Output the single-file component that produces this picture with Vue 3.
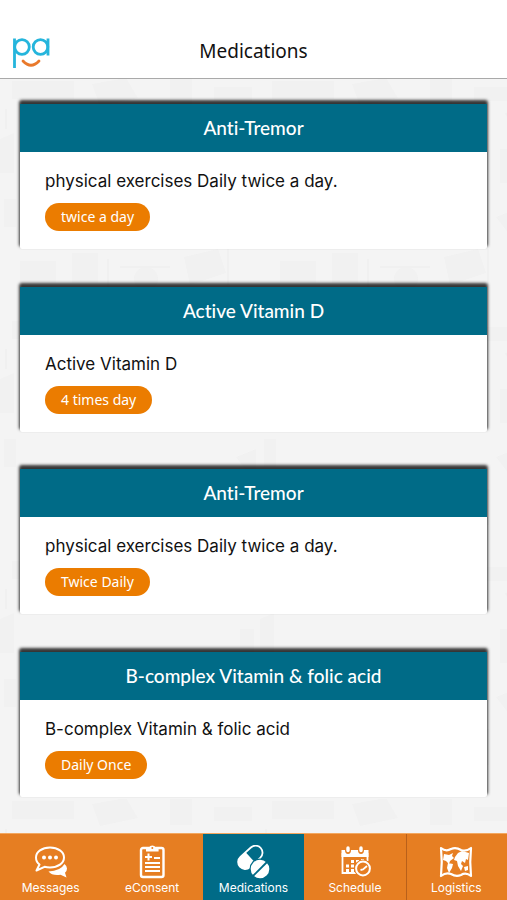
<script setup>
const medications = [
  { id: 1, title: 'Anti-Tremor', text: 'physical exercises Daily twice a day.', dose: 'twice a day' },
  { id: 2, title: 'Active Vitamin D', text: 'Active Vitamin D', dose: '4 times day' },
  { id: 3, title: 'Anti-Tremor', text: 'physical exercises Daily twice a day.', dose: 'Twice Daily' },
  { id: 4, title: 'B-complex Vitamin & folic acid', text: 'B-complex Vitamin & folic acid', dose: 'Daily Once' },
]

const tabs = [
  { id: 'messages', label: 'Messages' },
  { id: 'econsent', label: 'eConsent' },
  { id: 'medications', label: 'Medications', active: true },
  { id: 'schedule', label: 'Schedule' },
  { id: 'logistics', label: 'Logistics' },
]
</script>

<template>
  <div class="screen">
    <header class="topbar">
      <a class="logo" href="#" aria-label="Home">
        <svg viewBox="0 0 38 34" fill="none" stroke-width="2.800">
          <g stroke="#25b5dc">
            <circle cx="10" cy="13" r="7.300" />
            <path d="M2.500 4.500V34M36 4.500v17" />
            <circle cx="28.500" cy="13" r="7.300" />
          </g>
          <path d="M11 27q8 8.500 16 0" stroke="#e9792b" stroke-width="2.800" stroke-linecap="round" />
        </svg>
      </a>
      <h1>Medications</h1>
    </header>

    <main class="list">
      <svg class="pattern" aria-hidden="true">
        <defs>
          <pattern id="sketches" width="260" height="240" patternUnits="userSpaceOnUse">
            <g fill="#f1f1f1">
              <path d="M12 2h62v18H12zM92 5l34-6 12 20-38 8zM170 0h22v26h-22zM214 8h38v14h-38z" />
              <path d="M0 60l14-6v40H0zM4 120h12v28H4zM240 70h14v34h-14zM236 138l20-8v34z" />
              <circle cx="146" cy="200" r="12" />
              <path d="M20 182h36v22H20zM72 174h26v30H72zM184 178l34-8 8 24-36 12z" />
            </g>
            <g fill="none" stroke="#f0f0f0" stroke-width="2">
              <path d="M30 210h54M108 180v34M120 188h50M228 170v36M6 30v20M246 34l10 18" />
            </g>
          </pattern>
        </defs>
        <rect width="100%" height="100%" fill="url(#sketches)" />
      </svg>
      <article v-for="item in medications" :key="item.id" class="card">
        <h2>{{ item.title }}</h2>
        <div class="body">
          <p>{{ item.text }}</p>
          <span class="chip">{{ item.dose }}</span>
        </div>
      </article>
    </main>

    <nav class="tabs">
      <a v-for="tab in tabs" :key="tab.id" href="#" class="tab" :class="{ active: tab.active }">
        <svg v-if="tab.id === 'messages'" viewBox="0 0 34 34">
          <path fill="#fff" d="M30.500 19q2.500 2 2.500 4.500 0 2.500-2 4.200l1.500 4.800-6-2.700q-8.500 1.200-12-3.300 12-.500 16-7.500z" />
          <path fill="#e67e22" stroke="#fff" stroke-width="2" stroke-linejoin="round" d="M16 2.500c8 0 14 4.300 14 10s-6 10-14 10q-3 0-5.500-.700L2.500 25.500 5.500 19.500Q2 17 2 12.500c0-5.700 6-10 14-10z" />
          <g fill="#fff"><circle cx="10" cy="12.500" r="2" /><circle cx="16" cy="12.500" r="2" /><circle cx="22" cy="12.500" r="2" /></g>
        </svg>
        <svg v-else-if="tab.id === 'econsent'" viewBox="0 0 34 34">
          <rect x="6" y="3" width="22.500" height="29" rx="2" fill="none" stroke="#fff" stroke-width="2.400" />
          <path fill="#fff" d="M11 6.500V3.500l3-1q1-2 3.300-2t3.300 2l3 1v3z" />
          <circle cx="17.300" cy="3" r="1" fill="#e67e22" />
          <path fill="none" stroke="#fff" stroke-width="2" d="M13.500 8.500v7M10 12h7M19 13h6M10 18h15M10 22h15M10 26h15" />
        </svg>
        <svg v-else-if="tab.id === 'medications'" viewBox="0 0 34 34">
          <g transform="rotate(-42 14 12)">
            <rect x="0" y="5.500" width="28" height="14" rx="7" fill="none" stroke="#fff" stroke-width="1.800" />
            <path fill="#fff" d="M14 5.500H7a7 7 0 0 0 0 14h7z" />
          </g>
          <circle cx="24" cy="24" r="10.500" fill="#006b87" />
          <circle cx="24" cy="24" r="9.300" fill="#fff" />
          <path d="M17 31L31 17" stroke="#006b87" stroke-width="1.800" />
        </svg>
        <svg v-else-if="tab.id === 'schedule'" viewBox="0 0 34 34">
          <path fill="none" stroke="#fff" stroke-width="1.800" d="M4.500 8v20H19M29.500 8v8" />
          <path fill="#fff" d="M3.500 5H7q0 4 3 4t3-4h7q0 4 3 4t3-4h4.500v7h-27z" />
          <path fill="none" stroke="#fff" stroke-width="3.400" stroke-linecap="round" d="M10 3v2.500M23 3v2.500" />
          <path fill="#fff" d="M13 15h3v3h-3zM18 15h3v3h-3zM23 14h3v3h-3zM8 19.500h3v3H8zM13 19.500h3v3h-3zM8 24h3v3H8zM13 24h3v3h-3z" />
          <circle cx="25" cy="23.500" r="9" fill="#e67e22" />
          <circle cx="25" cy="23.500" r="6.900" fill="none" stroke="#fff" stroke-width="2" />
          <path fill="none" stroke="#fff" stroke-width="1.800" d="M22.500 25l2.500-.500 4-3.500" />
        </svg>
        <svg v-else viewBox="0 0 34 34">
          <path fill="none" stroke="#fff" stroke-width="2.200" stroke-linejoin="round" d="M2 3Q7 7 12 4Q17 2 22 5Q27 7 32 3Q30.500 17 32 31Q27 27 22 30Q17 32 12 29Q7 27 2 31Q3.500 17 2 3Z" />
          <path fill="#fff" d="M5 9l5 1 4-2-1 3 2 2-4 3-1 3-3-3-3-1zM9 18l5 1-1 4-3 5-2-5zM16 12l3-4 4-2 7 2-1 7-2-1-1 4-3-2-1 3 2 2-2 5-3-5-1-5-3-1zM25 22l4-1v4l-3 1z" />
        </svg>
        <span>{{ tab.label }}</span>
      </a>
    </nav>
  </div>
</template>

<style>
body {
  margin: 0;
}
</style>

<style scoped>
.screen {
  display: flex;
  flex-direction: column;
  min-height: 100vh;
  background: #f4f4f4;
  font-family: Inter, "Liberation Sans", sans-serif;
}

h1,
h2,
p {
  margin: 0;
}

.topbar {
  display: grid;
  grid-template-columns: 48px 1fr 48px;
  align-items: center;
  height: 54px;
  padding: 24px 12px 0;
  border-bottom: 1px solid #a9a9a9;
  background: #fff;
}

.logo svg {
  display: block;
  width: 38px;
  height: 34px;
}

h1 {
  color: #111;
  font: 400 19px/30px "Noto Sans", sans-serif;
  text-align: center;
}

.list {
  position: relative;
  display: flex;
  flex: 1;
  flex-direction: column;
  justify-content: space-between;
  gap: 36px;
  padding: 25px 20px 36px;
}

.pattern {
  position: absolute;
  inset: 0;
  width: 100%;
  height: 100%;
}

.card {
  position: relative;
  border-radius: 2px;
  background: #fff;
  box-shadow: 0 -3px 3px 1px rgba(0, 0, 0, 0.78);
}

h2 {
  background: #006b87;
  color: #fff;
  font: 500 19px/48px Lato, sans-serif;
  font-variant-ligatures: none;
  text-align: center;
}

.body {
  display: flex;
  flex-direction: column;
  align-items: flex-start;
  gap: 10px;
  padding: 17px 25px 18px;
}

p {
  color: #111;
  font-size: 17px;
  line-height: 24px;
}

.chip {
  padding: 0 16px;
  border-radius: 14px;
  background: #eb7c00;
  color: #fff;
  font: 400 14px/28px "Noto Sans", sans-serif;
}

.tabs {
  display: grid;
  grid-template-columns: repeat(5, 1fr);
  background: #e67e22;
}

.tab {
  display: flex;
  flex-direction: column;
  align-items: center;
  gap: 1px;
  padding: 11px 0 4px;
  border-top: 1px solid #f3a75f;
  color: #fff;
  font-size: 12px;
  line-height: 16px;
  text-decoration: none;
}

.tab.active {
  background: #006b87;
}

.tab:last-child {
  box-shadow: inset 1px 0 #b9601a;
}

.tab svg {
  width: 34px;
  height: 34px;
}
</style>
